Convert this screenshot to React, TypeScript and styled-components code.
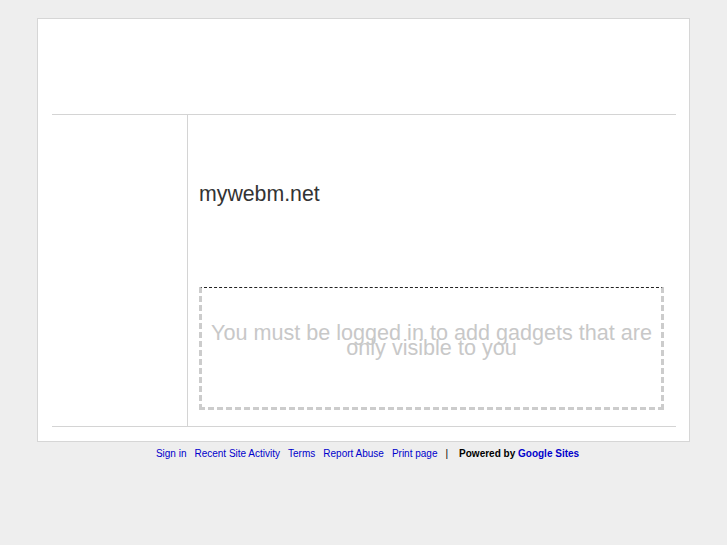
import React from "react";
import styled, { createGlobalStyle } from "styled-components";

const Global = createGlobalStyle`
  html, body { margin: 0; padding: 0; background: #eeeeee; }
  body { font-family: "Liberation Sans", Arial, sans-serif; }
`;

const Page = styled.div`
  padding-top: 18px;
  min-height: 545px;
  box-sizing: border-box;
`;

const Card = styled.div`
  width: 624px;
  margin: 0 auto;
  background: #ffffff;
  border: 1px solid #d6d6d6;
  padding: 0 13px 14px 14px;
  box-sizing: content-box;
`;

const Header = styled.div`
  height: 95px;
`;

const Main = styled.div`
  display: flex;
  height: 311px;
  border-top: 1px solid #d4d4d4;
  border-bottom: 1px solid #d4d4d4;
`;

const Sidebar = styled.div`
  width: 135px;
  flex: none;
  border-right: 1px solid #d4d4d4;
`;

const Content = styled.div`
  flex: 1;
  padding: 0 12px 0 11px;
  min-width: 0;
`;

const Title = styled.h1`
  margin: 67px 0 0;
  font-size: 21.3px;
  line-height: 24px;
  font-weight: normal;
  color: #333333;
`;

const Gadget = styled.div`
  margin-top: 81px;
  height: 119px;
  border-top: 1px dashed #222222;
  border-left: 3px dashed #cccccc;
  border-right: 3px dashed #cccccc;
  border-bottom: 3px dashed #cccccc;
  box-sizing: content-box;
`;

const GadgetText = styled.div`
  padding: 37px 4px 0;
  text-align: center;
  color: #c8c8c8;
  font-size: 21.6px;
  line-height: 15px;
`;

const Footer = styled.div`
  display: flex;
  justify-content: center;
  align-items: baseline;
  margin-top: 6px;
  padding-left: 8px;
  font-size: 10px;
  line-height: 12px;
`;

const FootLink = styled.a`
  color: #0000cc;
  text-decoration: none;
  margin-right: 8px;
  &:last-of-type { margin-right: 5px; }
`;

const Sep = styled.span`
  color: #000;
  margin-right: 11px;
`;

const Powered = styled.span`
  font-weight: bold;
  color: #000;
  white-space: pre;
`;

const SitesLink = styled.a`
  color: #0000cc;
  text-decoration: none;
  font-weight: bold;
`;

export default function App() {
  return (
    <>
      <Global />
      <Page>
        <Card>
          <Header />
          <Main>
            <Sidebar />
            <Content>
              <Title>mywebm.net</Title>
              <Gadget>
                <GadgetText>
                  You must be logged in to add gadgets that are only visible to you
                </GadgetText>
              </Gadget>
            </Content>
          </Main>
        </Card>
        <Footer>
          <FootLink href="#">Sign in</FootLink>
          <FootLink href="#">Recent Site Activity</FootLink>
          <FootLink href="#">Terms</FootLink>
          <FootLink href="#">Report Abuse</FootLink>
          <FootLink href="#">Print page</FootLink>
          <Sep>|</Sep>
          <Powered>Powered by </Powered>
          <SitesLink href="#">Google Sites</SitesLink>
        </Footer>
      </Page>
    </>
  );
}
